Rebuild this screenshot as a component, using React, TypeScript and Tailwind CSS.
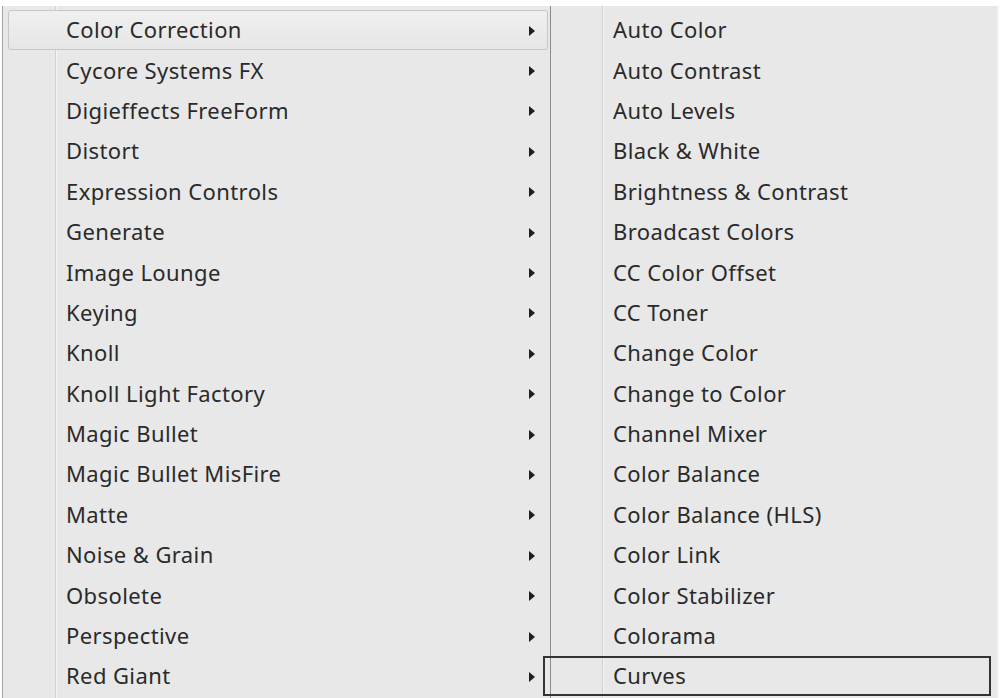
import React from "react";

const categories = [
  "Color Correction",
  "Cycore Systems FX",
  "Digieffects FreeForm",
  "Distort",
  "Expression Controls",
  "Generate",
  "Image Lounge",
  "Keying",
  "Knoll",
  "Knoll Light Factory",
  "Magic Bullet",
  "Magic Bullet MisFire",
  "Matte",
  "Noise & Grain",
  "Obsolete",
  "Perspective",
  "Red Giant",
];

const effects = [
  "Auto Color",
  "Auto Contrast",
  "Auto Levels",
  "Black & White",
  "Brightness & Contrast",
  "Broadcast Colors",
  "CC Color Offset",
  "CC Toner",
  "Change Color",
  "Change to Color",
  "Channel Mixer",
  "Color Balance",
  "Color Balance (HLS)",
  "Color Link",
  "Color Stabilizer",
  "Colorama",
  "Curves",
];

const Arrow = () => (
  <svg width="6" height="10" viewBox="0 0 6 10" className="shrink-0 mt-[1px]">
    <path d="M0 0 L6 5 L0 10 Z" fill="#1e1e1e" />
  </svg>
);

const App = () => {
  return (
    <div
      className="flex w-[1008px] h-[698px] overflow-hidden bg-white pt-[6px] text-[22px] tracking-[0.4px] text-[#2a2a2a]"
      style={{ fontFamily: '"Noto Sans", "Open Sans", sans-serif' }}
    >
      {/* Category menu */}
      <div className="relative ml-[2px] w-[549px] bg-[#e8e8e8] border-l border-[#a4a4a4] border-r border-r-[#8c8c8c]">
        <div className="absolute left-[52px] top-0 bottom-0 w-px bg-[#d2d2d2]" />
        <div className="absolute left-[53px] top-0 bottom-0 w-px bg-[#f4f4f4]" />
        <div className="relative flex flex-col pt-[4px] pl-[5px] pr-[2px]">
          {categories.map((name, i) => (
            <div
              key={name}
              className={
                i === 0
                  ? "flex items-center h-[40.4px] pl-[57px] pr-[12px] rounded-[3px] border border-[#c6c6c6] bg-gradient-to-b from-[#f0f0f0] to-[#e6e6e6]"
                  : "flex items-center h-[40.4px] pl-[58px] pr-[13px]"
              }
            >
              <span className="flex-1 leading-none pb-[2px]">{name}</span>
              <Arrow />
            </div>
          ))}
        </div>
      </div>

      {/* Effects submenu */}
      <div className="relative w-[446px] bg-[#e8e8e8]">
        <div className="absolute left-[51px] top-0 bottom-0 w-px bg-[#d2d2d2]" />
        <div className="absolute left-[52px] top-0 bottom-0 w-px bg-[#f4f4f4]" />
        <div className="relative flex flex-col pt-[4px]">
          {effects.map((name) => (
            <div key={name} className="relative flex items-center h-[40.4px] pl-[62px]">
              <span className="leading-none pb-[2px]">{name}</span>
              {name === "Curves" && (
                <div className="absolute -left-[8px] right-[6px] top-[0px] bottom-[1px] border-2 border-[#333]" />
              )}
            </div>
          ))}
        </div>
      </div>
      <div className="w-[2px] h-full bg-[#f3f3f3]" />
    </div>
  );
};

export default App;
